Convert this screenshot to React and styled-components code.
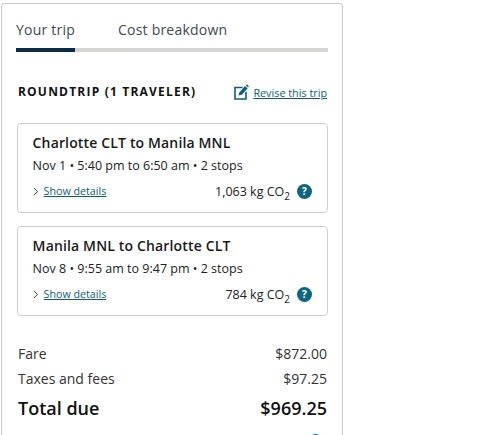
import React from "react";
import styled, { createGlobalStyle } from "styled-components";

const Global = createGlobalStyle`
  html, body { margin: 0; padding: 0; background: #fff; height: 435px; overflow: hidden; }
  body { font-family: "Open Sans", "Liberation Sans", sans-serif; color: #1a1a1a; }
`;
const Panel = styled.section`
  box-sizing: border-box;
  width: 342px;
  margin: 3px 0 0 1px;
  padding: 14px 14px 0;
  border: 1px solid #c8c8c8;
  border-bottom: 0;
  border-radius: 4px 4px 0 0;
  height: 432px;
  overflow: hidden;
`;
const Tabs = styled.div`
  display: flex;
  gap: 43px;
  border-bottom: 4px solid #d4d4d2;
`;
const Tab = styled.div`
  font-size: 14px;
  line-height: 24px;
  letter-spacing: 0.22px;
  color: #3f4a52;
  padding-bottom: 6px;
  margin-bottom: -4px;
  border-bottom: 4px solid ${(p) => (p.$active ? "#0b2a4a" : "transparent")};
`;
const Header = styled.div`
  display: flex;
  align-items: center;
  justify-content: space-between;
  margin-top: 28px;
  height: 22px;
`;
const Title = styled.h2`
  margin: 0 0 0 2px;
  font-size: 12px;
  font-weight: 700;
  letter-spacing: 1.2px;
  color: #111;
`;
const Revise = styled.a`
  display: flex;
  align-items: center;
  gap: 4px;
  margin: 2px 1px 0 0;
  font-size: 10.8px;
  color: #0b5f78;
  text-decoration: underline;
`;
const Card = styled.article`
  box-sizing: border-box;
  height: 90px;
  margin: ${(p) => p.$mt}px 0 0 1px;
  padding: 9px 15px 0 14.6px;
  border: 1px solid #cfcfcf;
  border-radius: 4px;
`;
const Route = styled.h3`
  margin: 0;
  font-size: 14px;
  line-height: 20px;
  font-weight: 600;
  letter-spacing: 0.15px;
  color: #1a1a1a;
`;
const Times = styled.p`
  margin: 4px 0 0;
  font-size: 12.5px;
  line-height: 18px;
  color: #222;
`;
const CardFoot = styled.div`
  display: flex;
  align-items: center;
  justify-content: space-between;
  margin-top: 7px;
  height: 18px;
`;
const Details = styled.a`
  display: flex;
  align-items: center;
  gap: 5px;
  font-size: 10.7px;
  color: #0b5f78;
  span { text-decoration: underline; }
`;
const Emission = styled.div`
  display: flex;
  align-items: center;
  gap: 7px;
  font-size: 12.5px;
  color: #222;
  sub { font-size: 10px; line-height: 0; }
`;
const Help = styled.span`
  width: 15px;
  height: 15px;
  border-radius: 50%;
  background: #0f6580;
  color: #fff;
  font-size: 10px;
  font-weight: 700;
  line-height: 15px;
  text-align: center;
`;
const Costs = styled.div`
  margin: 25px 0 0 2px;
`;
const CostRow = styled.div`
  display: flex;
  justify-content: space-between;
  align-items: center;
  height: 25px;
  font-size: 14px;
  color: #333;
  padding-right: 1px;
`;
const TotalRow = styled.div`
  display: flex;
  justify-content: space-between;
  align-items: center;
  height: 33px;
  font-size: 18px;
  font-weight: 600;
  color: #111;
  padding-right: 1px;
`;
const Peek = styled.div`
  display: flex;
  justify-content: flex-end;
  margin: 10px 6px 0 0;
  div {
    width: 13px;
    height: 13px;
    border-radius: 50%;
    background: #0b7f98;
  }
`;

const Chevron = () => (
  <svg width="6" height="9" viewBox="0 0 6 9" fill="none">
    <path d="M1 1l3.5 3.5L1 8" stroke="#0b5f78" strokeWidth="1" />
  </svg>
);
const EditIcon = () => (
  <svg width="15" height="16" viewBox="0 0 15 16" fill="none">
    <path d="M8.5 3.5H1v11.5h11V8" stroke="#0b5f78" strokeWidth="1.6" />
    <path d="M4.5 11.5l.8-3 5.7-6.5 2.6 2.4-5.8 6.3z" fill="#0b5f78" />
    <path d="M11.8 1.2l.9-.9 2.2 2-.9 1.1z" fill="#0b5f78" />
  </svg>
);

const Leg = ({ route, times, co2, mt }) => (
  <Card $mt={mt}>
    <Route>{route}</Route>
    <Times>{times}</Times>
    <CardFoot>
      <Details>
        <Chevron />
        <span>Show details</span>
      </Details>
      <Emission>
        <div>
          {co2} kg CO<sub>2</sub>
        </div>
        <Help>?</Help>
      </Emission>
    </CardFoot>
  </Card>
);

export default function App() {
  return (
    <>
      <Global />
      <Panel>
        <Tabs>
          <Tab $active>Your trip</Tab>
          <Tab>Cost breakdown</Tab>
        </Tabs>
        <Header>
          <Title>ROUNDTRIP (1 TRAVELER)</Title>
          <Revise>
            <EditIcon />
            <span>Revise this trip</span>
          </Revise>
        </Header>
        <Leg mt={21} route="Charlotte CLT to Manila MNL" times="Nov 1 • 5:40 pm to 6:50 am • 2 stops" co2="1,063" />
        <Leg mt={13} route="Manila MNL to Charlotte CLT" times="Nov 8 • 9:55 am to 9:47 pm • 2 stops" co2="784" />
        <Costs>
          <CostRow><span>Fare</span><span>$872.00</span></CostRow>
          <CostRow><span>Taxes and fees</span><span>$97.25</span></CostRow>
          <TotalRow><span>Total due</span><span>$969.25</span></TotalRow>
        </Costs>
        <Peek><div /></Peek>
      </Panel>
    </>
  );
}
